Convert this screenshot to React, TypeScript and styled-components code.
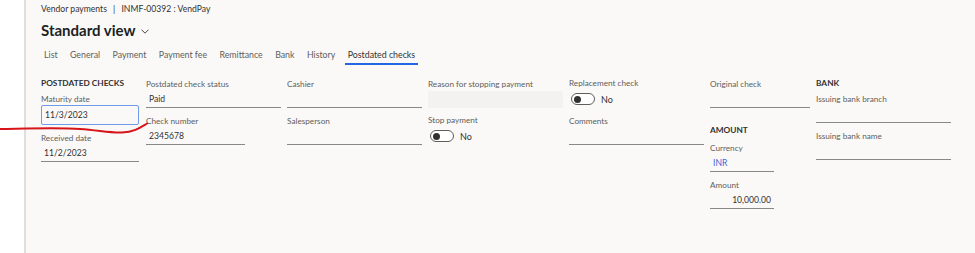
import { styled, createGlobalStyle } from 'styled-components'

const GlobalStyle = createGlobalStyle`
  html, body {
    margin: 0;
    padding: 0;
    background: #fff;
  }
  body {
    font-family: Lato, 'Open Sans', sans-serif;
    color: #323130;
  }
`

type FieldProps = {
  label: string
  value?: string
  width?: number
  kind?: 'line' | 'focused' | 'disabled'
  align?: 'left' | 'right'
  link?: boolean
}

function Field({ label, value, width, kind = 'line', align = 'left', link }: FieldProps) {
  return (
    <FieldWrap $kind={kind}>
      <Label>{label}</Label>
      <Input $kind={kind} $w={width} $align={align} $link={link}>
        {value}
      </Input>
    </FieldWrap>
  )
}

function ToggleField({ label }: { label: string }) {
  return (
    <FieldWrap $kind="toggle">
      <Label>{label}</Label>
      <ToggleRow>
        <Toggle />
        <ToggleText>No</ToggleText>
      </ToggleRow>
    </FieldWrap>
  )
}

const tabs = ['List', 'General', 'Payment', 'Payment fee', 'Remittance', 'Bank', 'History', 'Postdated checks']

function App() {
  return (
    <>
      <GlobalStyle />
      <Page>
        <Gutter />
        <Main>
          <Breadcrumb>
            Vendor payments <Sep>|</Sep> INMF-00392 : VendPay
          </Breadcrumb>
          <Title>
            Standard view
            <svg width="8" height="5" viewBox="0 0 8 5">
              <path d="M0.5 0.7 L4 4.2 L7.5 0.7" fill="none" stroke="#323130" strokeWidth="0.9" />
            </svg>
          </Title>
          <Tabs>
            {tabs.map((t) => (
              <Tab key={t} $active={t === 'Postdated checks'}>
                {t}
              </Tab>
            ))}
          </Tabs>
          <Form>
            <Column>
              <GroupTitle>POSTDATED CHECKS</GroupTitle>
              <Field label="Maturity date" value="11/3/2023" width={98} kind="focused" />
              <Field label="Received date" value="11/2/2023" width={98} />
            </Column>
            <Column>
              <Field label="Postdated check status" value="Paid" width={135} />
              <Field label="Check number" value="2345678" width={99} />
            </Column>
            <Column>
              <Field label="Cashier" width={135} />
              <Field label="Salesperson" width={135} />
            </Column>
            <Column>
              <Field label="Reason for stopping payment" width={135} kind="disabled" />
              <ToggleField label="Stop payment" />
            </Column>
            <Column>
              <ToggleField label="Replacement check" />
              <Field label="Comments" width={135} />
            </Column>
            <Column>
              <Field label="Original check" width={100} />
              <GroupTitle $spaced>AMOUNT</GroupTitle>
              <Field label="Currency" value="INR" width={64} link />
              <Field label="Amount" value="10,000.00" width={64} align="right" />
            </Column>
            <Column>
              <GroupTitle>BANK</GroupTitle>
              <Field label="Issuing bank branch" width={135} />
              <Field label="Issuing bank name" width={135} />
            </Column>
          </Form>
        </Main>
        {/* red pen mark drawn over the screenshot */}
        <Scribble width="160" height="22" viewBox="0 0 160 22">
          <path
            d="M0 11 C 30 10.5, 60 9.5, 80 11 C 100 12.5, 110 15, 122 14.5 C 135 14, 141 9, 147 5.5"
            fill="none"
            stroke="#d8141b"
            strokeWidth="2"
            strokeLinecap="round"
          />
        </Scribble>
      </Page>
    </>
  )
}
export default App

const Page = styled.div`
  position: relative;
  display: flex;
  width: 975px;
  height: 253px;
  overflow: hidden;
`

const Gutter = styled.div`
  width: 24px;
  flex: none;
  background: #fff;
  border-right: 2px solid #e1dfdd;
`

const Main = styled.div`
  flex: 1;
  background: #faf9f8;
  padding-left: 15px;
`

const Breadcrumb = styled.div`
  margin-top: 3px;
  font-size: 8.6px;
  line-height: 12px;
  color: #323130;
`

const Sep = styled.span`
  margin: 0 4px;
`

const Title = styled.div`
  display: flex;
  align-items: center;
  gap: 5px;
  margin-top: 5px;
  height: 20px;
  font-size: 15px;
  font-weight: 700;
  color: #201f1e;

  svg {
    margin-top: 3px;
  }
`

const Tabs = styled.div`
  display: flex;
  gap: 6.4px;
  margin-top: 7px;
  height: 18px;
`

const Tab = styled.div<{ $active?: boolean }>`
  padding: 0 3px;
  font-size: 8.8px;
  line-height: 16px;
  color: ${({ $active }) => ($active ? '#323130' : '#605e5c')};
  border-bottom: 2px solid ${({ $active }) => ($active ? '#2266e3' : 'transparent')};
`

const Form = styled.div`
  display: grid;
  grid-template-columns: 105px 141px 141px 141px 141px 106px 135px;
  margin-top: 11px;
`

const Column = styled.div`
  display: flex;
  flex-direction: column;
  gap: 5px;
`

const GroupTitle = styled.div<{ $spaced?: boolean }>`
  font-size: 8.3px;
  font-weight: 700;
  line-height: 14px;
  margin-bottom: ${({ $spaced }) => ($spaced ? '-2px' : '-4px')};
  margin-top: ${({ $spaced }) => ($spaced ? '10px' : '0')};
  color: #323130;
`

const FieldWrap = styled.div<{ $kind: string }>`
  display: flex;
  flex-direction: column;
  margin-top: ${({ $kind }) => ($kind === 'toggle' ? '0' : '1px')};
`

const Label = styled.div`
  font-size: 8.2px;
  line-height: 14px;
  color: #605e5c;
  white-space: nowrap;
`

const Input = styled.div<{ $kind: string; $w?: number; $align: string; $link?: boolean }>`
  box-sizing: border-box;
  width: ${({ $w }) => $w ?? 135}px;
  height: ${({ $kind }) => ($kind === 'focused' ? 20 : 17)}px;
  margin-top: ${({ $kind }) => ($kind === 'focused' ? '-1px' : '0')};
  padding: 0 3px;
  font-size: 8.6px;
  line-height: ${({ $kind }) => ($kind === 'focused' ? 18 : 17)}px;
  text-align: ${({ $align }) => $align};
  color: ${({ $link }) => ($link ? '#3b67d9' : '#323130')};
  background: ${({ $kind }) => ($kind === 'disabled' ? '#f3f2f1' : 'transparent')};
  border-radius: ${({ $kind }) => ($kind === 'line' ? 0 : 2)}px;
  border: ${({ $kind }) => ($kind === 'focused' ? '1px solid #6f9be8' : 'none')};
  border-bottom: ${({ $kind }) =>
    $kind === 'focused' ? '1px solid #6f9be8' : $kind === 'disabled' ? 'none' : '1px solid #8a8886'};
`

const ToggleRow = styled.div`
  display: flex;
  align-items: center;
  gap: 6px;
  height: 18px;
  padding-left: 2px;
`

const Toggle = styled.div`
  position: relative;
  box-sizing: border-box;
  width: 24px;
  height: 12px;
  border: 1px solid #605e5c;
  border-radius: 6px;
  background: #fff;

  &::after {
    content: '';
    position: absolute;
    left: 2px;
    top: 1.5px;
    width: 7px;
    height: 7px;
    border-radius: 50%;
    background: #323130;
  }
`

const ToggleText = styled.span`
  font-size: 9px;
  color: #323130;
`

const Scribble = styled.svg`
  position: absolute;
  left: 0;
  top: 118px;
`
